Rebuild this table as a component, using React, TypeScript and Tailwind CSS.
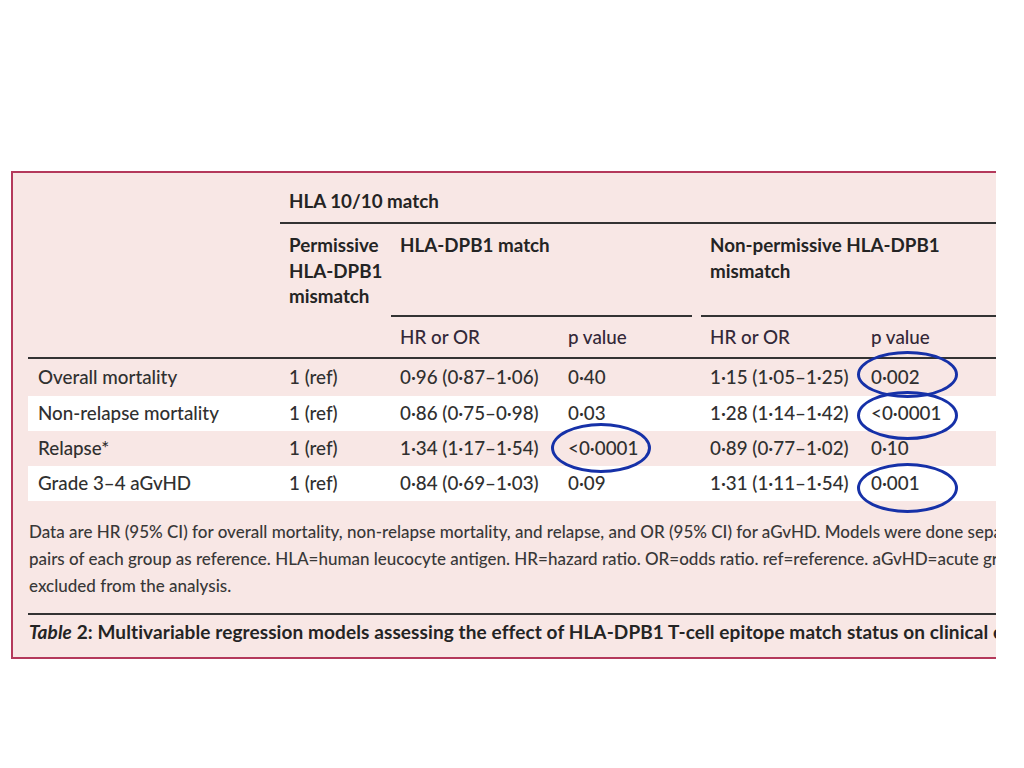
import React from "react";

const rows = [
  { label: "Overall mortality", ref: "1 (ref)", hr1: "0·96 (0·87–1·06)", p1: "0·40", hr2: "1·15 (1·05–1·25)", p2: "0·002", bg: "bg-transparent", h: "h-[37px]" },
  { label: "Non-relapse mortality", ref: "1 (ref)", hr1: "0·86 (0·75–0·98)", p1: "0·03", hr2: "1·28 (1·14–1·42)", p2: "<0·0001", bg: "bg-white", h: "h-[35px]" },
  { label: "Relapse*", ref: "1 (ref)", hr1: "1·34 (1·17–1·54)", p1: "<0·0001", hr2: "0·89 (0·77–1·02)", p2: "0·10", bg: "bg-transparent", h: "h-[35px]" },
  { label: "Grade 3–4 aGvHD", ref: "1 (ref)", hr1: "0·84 (0·69–1·03)", p1: "0·09", hr2: "1·31 (1·11–1·54)", p2: "0·001", bg: "bg-white", h: "h-[35px]" },
];

export default function App() {
  return (
    <div className="relative w-[1024px] h-[768px] bg-white overflow-hidden font-['Lato','Liberation_Sans',sans-serif] text-[#303030]">
      <div className="pt-[171px] pl-[11px]">
        <div className="w-[985px] h-[488px] overflow-hidden bg-[#f8e7e5] border-l-2 border-t-2 border-b-2 border-[#b4395b]">
          <div className="pl-[15px] w-[1150px]">
            {/* header row 1 */}
            <div className="flex">
              <div className="w-[252px] shrink-0" />
              <div className="flex-1 h-[51px] border-b-2 border-[#333] flex items-center pt-[8px] pl-[9px] font-bold text-[18.8px] text-[#242424]">
                HLA 10/10 match
              </div>
            </div>
            {/* header row 2 */}
            <div className="flex h-[93px] font-bold text-[18.8px] leading-[25.5px] text-[#242424]">
              <div className="w-[252px] shrink-0" />
              <div className="w-[111px] shrink-0 pl-[9px] pt-[8px] whitespace-nowrap">
                Permissive
                <br />
                HLA-DPB1
                <br />
                mismatch
              </div>
              <div className="w-[301px] shrink-0 pl-[9px] pt-[8px] border-b-2 border-[#333]">HLA-DPB1 match</div>
              <div className="w-[9px] shrink-0" />
              <div className="flex-1 pl-[9px] pt-[8px] border-b-2 border-[#333]">
                Non-permissive HLA-DPB1
                <br />
                mismatch
              </div>
            </div>
            {/* header row 3 */}
            <div className="flex h-[42px] items-center border-b-2 border-[#333] text-[18.8px] font-medium text-[#332838]">
              <div className="w-[363px] shrink-0" />
              <div className="w-[168px] shrink-0 pl-[9px]">HR or OR</div>
              <div className="w-[142px] shrink-0 pl-[9px]">p value</div>
              <div className="w-[161px] shrink-0 pl-[9px]">HR or OR</div>
              <div className="flex-1 pl-[9px]">p value</div>
            </div>
            {/* data rows */}
            {rows.map((r) => (
              <div key={r.label} className={`flex items-center ${r.h} ${r.bg} text-[18.8px] font-medium whitespace-nowrap`}>
                <div className="w-[252px] shrink-0 pl-[10px]">{r.label}</div>
                <div className="w-[111px] shrink-0 pl-[9px]">{r.ref}</div>
                <div className="w-[168px] shrink-0 pl-[9px]">{r.hr1}</div>
                <div className="w-[142px] shrink-0 pl-[9px]">{r.p1}</div>
                <div className="w-[161px] shrink-0 pl-[9px]">{r.hr2}</div>
                <div className="flex-1 pl-[9px]">{r.p2}</div>
              </div>
            ))}
            {/* footnote */}
            <div className="pt-[17px] pb-[14px] pl-[1px] text-[17px] font-medium leading-[27px] whitespace-nowrap text-[#383838]">
              <div>Data are HR (95% CI) for overall mortality, non-relapse mortality, and relapse, and OR (95% CI) for aGvHD. Models were done separately</div>
              <div>pairs of each group as reference. HLA=human leucocyte antigen. HR=hazard ratio. OR=odds ratio. ref=reference. aGvHD=acute graft-versus-host disease.</div>
              <div>excluded from the analysis.</div>
            </div>
            {/* caption */}
            <div className="border-t-2 border-[#333] pt-[4px] pl-[1px] text-[19px] tracking-[0.1px] leading-[26px] font-bold whitespace-nowrap text-[#242424]">
              <span className="italic">Table</span> 2: Multivariable regression models assessing the effect of HLA-DPB1 T-cell epitope match status on clinical outcomes
            </div>
          </div>
        </div>
      </div>
      {/* annotation ellipses */}
      <div className="absolute left-[857px] top-[351px] w-[101px] h-[47px] rounded-[50%] border-[3.5px] border-[#1631a8]" />
      <div className="absolute left-[857px] top-[391px] w-[101px] h-[49px] rounded-[50%] border-[3.5px] border-[#1631a8]" />
      <div className="absolute left-[551px] top-[423px] w-[100px] h-[50px] rounded-[50%] border-[3.5px] border-[#1631a8]" />
      <div className="absolute left-[857px] top-[463px] w-[101px] h-[50px] rounded-[50%] border-[3.5px] border-[#1631a8]" />
    </div>
  );
}
